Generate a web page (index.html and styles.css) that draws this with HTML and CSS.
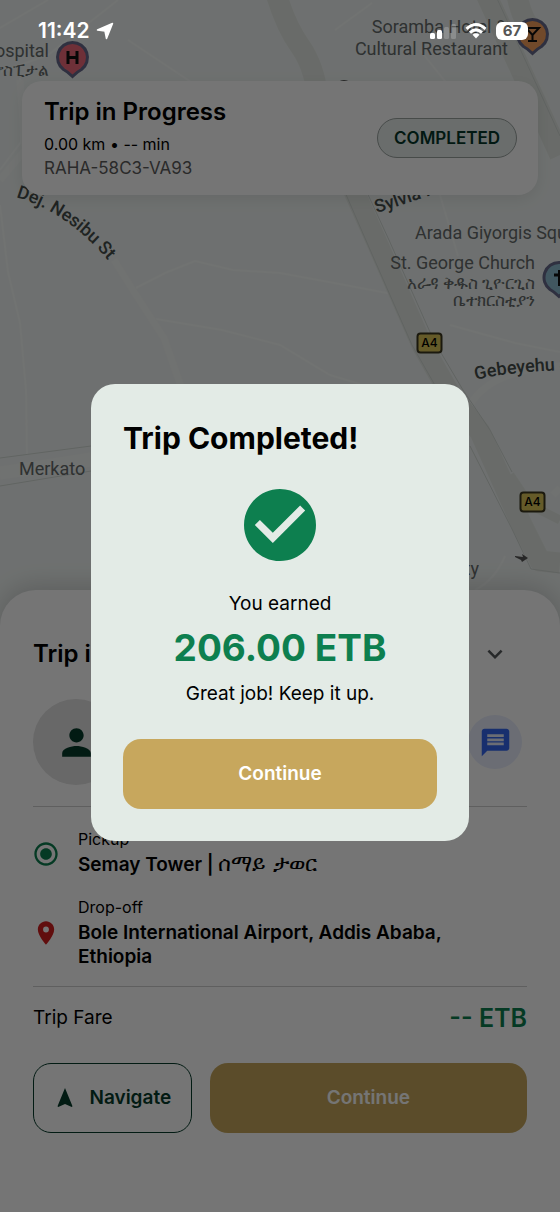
FILE: index.html
```html
<!DOCTYPE html>
<html lang="en">
<head>
<meta charset="utf-8">
<meta name="viewport" content="width=device-width, initial-scale=1">
<title>Trip Completed</title>
<link rel="stylesheet" href="styles.css">
</head>
<body>
<div class="screen">
  <svg class="map" viewBox="0 0 560 1212" preserveAspectRatio="xMidYMin slice" role="img" aria-label="Map">
    <rect class="land" width="560" height="1212"/>
    <g class="minor">
      <path d="M0 72 L48 55 118 0M128 40 L194 84M48 0 L0 28M20 78 L21 142 0 170M0 205 L8 272 20 323 26 390 27 455M136 288 L165 273 195 261 233 270 280 273 345 285 392 294M156 319 L222 330 280 345 330 375 360 384M335 30 L372 3M420 50 L460 100M440 195 L458 256M450 325 L515 343 560 352M518 120 L560 145M475 590 Q495 580 505 556"/>
      <path class="wide" d="M114 260 L136 295 164 338 184 395"/>
      <path class="wide" d="M0 470 L91 456M0 476 L91 463M470 405 Q490 370 560 366M553 495 L560 488"/>
      <path class="wide" d="M0 180 L25 150 20 80"/>
    </g>
    <g class="major">
      <path d="M516 -10 Q522 25 535 30"/>
      <path d="M275 -10 Q285 25 300 46 T318 100M485 -8 L560 155M340 160 L378 245 422 345 450 394 480 432 522 525 540 561 560 563"/>
      <path class="ramp" d="M510 475 L530 505 560 520"/>
    </g>
    <path class="edge" d="M494 -8 L560 136M352 160 L389 240 434 341 463 390 490 430 512 472M331 160 L368 245 412 345 440 394M470 446 L512 529 531 569 560 573M0 458 L91 446M0 486 L91 471"/>
    <g class="place" text-anchor="end">
      <text x="49" y="57">Hospital</text>
      <text class="local" x="49" y="76">ሆስፒታል</text>
      <text x="507" y="33">Soramba Hotel &amp;</text>
      <text x="508" y="55">Cultural Restaurant</text>
      <text x="535" y="269">St. George Church</text>
      <text class="local" x="535" y="289">አራዳ ቅዱስ ጊዮርጊስ</text>
      <text class="local" x="535" y="306">ቤተክርስቲያን</text>
      <text x="479" y="575">Piazza City</text>
    </g>
    <g class="place">
      <text x="415" y="239">Arada Giyorgis Square</text>
      <text x="19" y="475">Merkato</text>
    </g>
    <path id="nesibu" class="guide" d="M16 197 Q72 214 114 268"/>
    <path id="sylvia" class="guide" d="M377 213 Q405 204 470 182"/>
    <path id="gebeyehu" class="guide" d="M476 380 Q510 370 610 369"/>
    <g class="street">
      <text><textPath href="#nesibu">Dej. Nesibu St</textPath></text>
      <text><textPath href="#sylvia">Sylvia Pankhurst</textPath></text>
      <text><textPath href="#gebeyehu">Gebeyehu St</textPath></text>
    </g>
    <g class="pin">
      <path fill="#ef6a7b" d="M72.500 42.500a15 15 0 0 1 9 27q-4 2-9 7-5-5-9-7a15 15 0 0 1 9-27z"/>
      <path fill="#f7a05c" d="M532.500 19.500a15 15 0 0 1 9 27q-4 2-9 7-5-5-9-7a15 15 0 0 1 9-27z"/>
      <path fill="#8fbdd2" d="M559 262.500a15 15 0 0 1 9 27q-4 2-9 7-5-5-9-7a15 15 0 0 1 9-27z"/>
    </g>
    <path class="glyph" d="M68 51v13M77 51v13M68 57.500h9M559.500 270v16M554 275h8"/>
    <path class="glyph thin" d="M526 28h13l-6.500 7zM532.500 35v6M528 41h9"/>
    <g class="shield">
      <rect x="417.500" y="333.500" width="24" height="19" rx="3"/>
      <rect x="520.500" y="492.500" width="24" height="19" rx="3"/>
      <text x="429.500" y="347">A4</text>
      <text x="532.500" y="506">A4</text>
    </g>
    <path class="arrow" d="M515 556l8 1-1-3 6 4-6 4-1-2-6-3zM338 82q6-4 12 0z"/>
  </svg>

  <div class="app">
    <section class="trip-card">
      <div>
        <h1 class="heading">Trip in Progress</h1>
        <p class="meta">0.00 km • -- min</p>
        <p class="meta code">RAHA-58C3-VA93</p>
      </div>
      <span class="pill">COMPLETED</span>
    </section>

    <section class="sheet">
      <header class="sheet-head">
        <h2 class="heading">Trip in Progress</h2>
        <button class="icon-button" type="button" aria-label="Collapse">
          <svg width="30" height="30" viewBox="0 0 24 24"><path fill="#565a5c" d="M7.410 8.590 12 13.170l4.590-4.580L18 10l-6 6-6-6z"/></svg>
        </button>
      </header>
      <div class="people">
        <span class="avatar"><svg width="43" height="43" viewBox="0 0 24 24"><path fill="#063b2b" d="M12 12c2.210 0 4-1.790 4-4s-1.790-4-4-4-4 1.790-4 4 1.790 4 4 4zm0 2c-2.670 0-8 1.340-8 4v2h16v-2c0-2.660-5.330-4-8-4z"/></svg></span>
        <button class="chat" type="button" aria-label="Message">
          <svg width="33" height="33" viewBox="0 0 24 24"><path fill="#3568f0" d="M20 2H4c-1.100 0-1.990.900-1.990 2L2 22l4-4h14c1.100 0 2-.900 2-2V4c0-1.100-.900-2-2-2zM6 9h12v2H6V9zm12 5H6v-2h12v2zm0-6H6V6h12v2z"/></svg>
        </button>
      </div>
      <div class="stops">
        <div class="stop">
          <svg width="28" height="28" viewBox="0 0 24 24"><path fill="#0d7f4f" d="M12 7c-2.760 0-5 2.240-5 5s2.240 5 5 5 5-2.240 5-5-2.240-5-5-5zm0-5C6.480 2 2 6.480 2 12s4.480 10 10 10 10-4.480 10-10S17.520 2 12 2zm0 18c-4.420 0-8-3.580-8-8s3.580-8 8-8 8 3.580 8 8-3.580 8-8 8z"/></svg>
          <div><p class="label">Pickup</p><p class="address">Semay Tower | <span class="amharic" lang="am">ሰማይ ታወር</span></p></div>
        </div>
        <div class="stop">
          <svg width="28" height="28" viewBox="0 0 24 24"><path fill="#d32020" d="M12 2C8.130 2 5 5.130 5 9c0 5.250 7 13 7 13s7-7.750 7-13c0-3.870-3.130-7-7-7zm0 9.500a2.500 2.500 0 0 1 0-5 2.500 2.500 0 0 1 0 5z"/></svg>
          <div><p class="label">Drop-off</p><p class="address">Bole International Airport, Addis Ababa, Ethiopia</p></div>
        </div>
      </div>
      <div class="fare"><span>Trip Fare</span><strong>-- ETB</strong></div>
      <div class="actions">
        <button class="button outline" type="button">
          <svg width="24" height="24" viewBox="0 0 24 24"><path fill="#063b2b" d="M12 2 19.500 20.290l-.710.710L12 18l-6.790 3-.710-.710z"/></svg>
          Navigate
        </button>
        <button class="button gold" type="button">Continue</button>
      </div>
    </section>
  </div>

  <div class="backdrop">
    <section class="modal" role="dialog" aria-modal="true" aria-labelledby="done">
      <h2 id="done" class="modal-title">Trip Completed!</h2>
      <svg class="check" viewBox="2 2 20 20"><path fill="#0d7f4f" d="M12 2C6.480 2 2 6.480 2 12s4.480 10 10 10 10-4.480 10-10S17.520 2 12 2zm-2 15l-5-5 1.410-1.410L10 14.170l7.590-7.590L19 8l-9 9z"/></svg>
      <p class="note">You earned</p>
      <p class="amount">206.00 ETB</p>
      <p class="note">Great job! Keep it up.</p>
      <button class="button gold" type="button">Continue</button>
    </section>
  </div>

  <div class="status">
    <span class="clock">11:42
      <svg width="18" height="18" viewBox="0 0 18 18"><path fill="#fff" stroke="#fff" stroke-width="1.500" stroke-linejoin="round" d="M16.500 1.500 10.500 16.500 9 9 1.500 8z"/></svg>
    </span>
    <span class="indicators">
      <svg width="26" height="18" viewBox="0 0 26 18" fill="#fff"><rect y="11" width="5" height="6" rx="1.500"/><rect x="7" y="8" width="5" height="9" rx="1.500"/><g opacity=".2"><rect x="14" y="5" width="5" height="12" rx="1.500"/><rect x="21" y="2" width="5" height="15" rx="1.500"/></g></svg>
      <svg width="22" height="18" viewBox="0 0 22 18" fill="none" stroke="#fff" stroke-width="3"><path d="M1.500 6.800Q11-1.800 20.500 6.800M5 10.600Q11 5.200 17 10.600"/><path fill="#fff" stroke="none" d="M7.500 12.700Q11 10 14.500 12.700L11 16.500z"/></svg>
      <span class="battery">67</span>
    </span>
  </div>
</div>
</body>
</html>
```
FILE: styles.css
```css
* { box-sizing: border-box; }
body {
  margin: 0;
  background: #767676;
  color: #000;
  font-family: Inter, "Noto Sans", sans-serif;
  font-size: 19px;
  line-height: 24px;
}
h1, h2, p { margin: 0; }
button { font: inherit; padding: 0; border: 0; background: none; cursor: pointer; }
svg { flex: none; display: block; }

.screen {
  position: relative;
  display: grid;
  min-height: 100vh;
  overflow: hidden;
}
.screen > * { grid-area: 1 / 1; }

.map { position: absolute; width: 100%; height: 100%; }
.land { fill: #f0f5f3; }
.minor { fill: none; stroke: #f6faf8; stroke-width: 2; }
.minor .wide { stroke-width: 7; stroke: #f4f8f6; }
.major { fill: none; stroke: #e5eae5; stroke-width: 21; stroke-linejoin: round; }
.major .ramp { stroke-width: 9; }
.edge { fill: none; stroke: #d3dad6; stroke-width: 1; }
.guide { fill: none; }
.place { font-size: 18px; fill: #666c6c; font-family: Roboto, Inter, sans-serif; }
.local { font-size: 17px; }
.street { font-size: 18px; font-weight: 500; fill: #454d4b; font-family: Roboto, Inter, sans-serif; }
.pin { stroke: #666a8c; stroke-width: 3; }
.glyph { fill: none; stroke: #111; stroke-width: 3; }
.thin { stroke-width: 2; }
.shield { font-size: 12px; font-weight: 500; text-anchor: middle; }
.shield rect { fill: #dcc65a; stroke: #3b3820; stroke-width: 2; }
.arrow { fill: #555; }

.app {
  display: flex;
  flex-direction: column;
  justify-content: space-between;
  padding-top: 81px;
}
.trip-card {
  position: relative;
  display: flex;
  align-items: center;
  justify-content: space-between;
  margin: 0 22px;
  padding: 15px 21px 15px 22px;
  border-radius: 20px;
  background: #fff;
  box-shadow: 0 4px 16px rgba(0, 0, 0, .08);
}
.heading { font-size: 24px; line-height: 32px; font-weight: 600; }
.meta { font-size: 16px; line-height: 24px; }
.heading + .meta { margin: 4px 0 0; }
.code { color: #5c5c5c; font-size: 17px; }
.pill {
  padding: 7px 16px;
  border: 1px solid #9ba3a0;
  border-radius: 20px;
  background: #e6eeeb;
  color: #06382a;
  font-size: 17px;
  font-weight: 600;
}

.sheet {
  position: relative;
  padding: 48px 33px 79px;
  border-radius: 36px 36px 0 0;
  background: #fff;
  box-shadow: 0 -4px 24px rgba(0, 0, 0, .16);
}
.sheet-head, .people, .fare { display: flex; align-items: center; justify-content: space-between; }
.icon-button { margin-right: 17px; }
.people { padding: 29px 5px 21px 0; border-bottom: 1px solid #cfcfcf; }
.avatar, .chat { display: grid; place-items: center; border-radius: 50%; }
.avatar { width: 86px; height: 86px; background: #e2e2e2; }
.chat { width: 54px; height: 54px; background: #e9eefd; }
.stops { display: grid; gap: 20px; padding: 22px 0 17px; border-bottom: 1px solid #cfcfcf; }
.stop { display: grid; grid-template-columns: 27px 1fr; gap: 18px; padding-right: 32px; }
.stop > svg { margin: 11px 0 0 -1px; }
.stop + .stop > svg { margin-top: 22px; }
.label { margin-bottom: 4px; font-size: 16px; line-height: 20px; }
.address { font-weight: 600; }
.amharic { font-size: 22px; font-weight: 400; line-height: 20px; }
.fare { padding: 15px 0 29px; line-height: 32px; }
.fare strong { color: #0d7f4f; font-size: 25px; font-weight: 600; }
.actions { display: grid; grid-template-columns: 1fr 2fr; gap: 18px; }
.button {
  display: flex;
  align-items: center;
  justify-content: center;
  min-height: 70px;
  border-radius: 18px;
  font-weight: 600;
}
.outline { gap: 12px; border: 1px solid #063b2b; color: #063b2b; }
.gold { background: #c7a75d; color: #fff; }

.backdrop {
  z-index: 1;
  display: grid;
  place-items: center;
  padding: 13px 91px 0;
  background: rgba(0, 0, 0, .54);
}
.modal {
  display: flex;
  flex-direction: column;
  align-items: center;
  width: 100%;
  padding: 32px;
  border-radius: 24px;
  background: #e3ebe6;
  text-align: center;
}
.modal-title { align-self: flex-start; font-size: 30px; line-height: 44px; font-weight: 700; }
.check { width: 72px; height: 72px; margin: 29px 0 31px; }
.amount { margin: 8px 0 10px; color: #0d7f4f; font-size: 37px; line-height: 48px; font-weight: 700; }
.modal .button { width: 100%; margin-top: 33px; }

.status {
  z-index: 2;
  align-self: start;
  display: flex;
  justify-content: space-between;
  padding: 19px 32px 0 38px;
  color: #fff;
}
.clock { display: flex; align-items: center; gap: 6px; font-size: 21px; font-weight: 600; }
.indicators { display: flex; align-items: center; gap: 9px; }
.battery {
  min-width: 32px;
  border-radius: 6px;
  background: #fff;
  color: #555;
  font-size: 15px;
  line-height: 18px;
  font-weight: 700;
  text-align: center;
}
```
